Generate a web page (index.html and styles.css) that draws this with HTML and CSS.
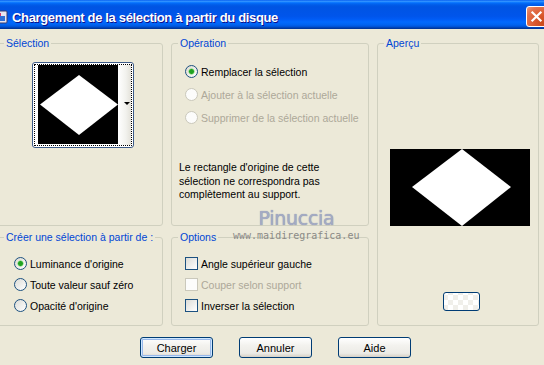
FILE: index.html
```html
<!DOCTYPE html>
<html lang="fr">

<head>
    <meta charset="UTF-8">
    <meta name="viewport" content="width=device-width, initial-scale=1.0">
    <title>Chargement de la sélection à partir du disque</title>
    <link rel="stylesheet" href="styles.css">
</head>

<body>
    <div class="window">
        <header class="titlebar">
            <svg class="app-icon" viewBox="0 0 16 16">
                <rect x="1" y="2" width="14" height="12" rx="1" fill="#e8e4f0" stroke="#3b3b6b"/>
                <rect x="3" y="4" width="6" height="6" fill="#d6336c"/>
                <rect x="7" y="7" width="6" height="5" fill="#2f6fd6"/>
            </svg>
            <h1>Chargement de la sélection à partir du disque</h1>
            <button class="close" aria-label="Fermer">
                <svg viewBox="0 0 21 21"><path d="M6 6 L15 15 M15 6 L6 15" stroke="#fff" stroke-width="2.4" stroke-linecap="square"/></svg>
            </button>
        </header>

        <main class="dialog">
            <div class="groups">
                <section class="group group-selection">
                    <h2 class="group-title">Sélection</h2>
                    <div class="thumb">
                        <div class="thumb-focus">
                            <svg class="thumb-img" viewBox="0 0 80 79">
                                <rect width="80" height="79" fill="#000"/>
                                <polygon points="2,39.5 41,10 80,39.5 41,70" fill="#fff"/>
                            </svg>
                            <div class="thumb-drop"><span class="arrow"></span></div>
                        </div>
                    </div>
                </section>

                <section class="group group-operation">
                    <h2 class="group-title">Opération</h2>
                    <ul class="choices">
                        <li class="radio checked">Remplacer la sélection</li>
                        <li class="radio disabled">Ajouter à la sélection actuelle</li>
                        <li class="radio disabled">Supprimer de la sélection actuelle</li>
                    </ul>
                    <p class="note">Le rectangle d'origine de cette<br>sélection ne correspondra pas<br>complètement au support.</p>
                </section>

                <section class="group group-preview">
                    <h2 class="group-title">Aperçu</h2>
                    <svg class="preview-img" viewBox="0 0 140 77">
                        <rect width="140" height="77" fill="#000"/>
                        <polygon points="22,38 72,0 121,38 72,77" fill="#fff"/>
                    </svg>
                    <button class="mini-btn" aria-label="Aperçu"></button>
                </section>

                <section class="group group-source">
                    <h2 class="group-title">Créer une sélection à partir de :</h2>
                    <ul class="choices">
                        <li class="radio checked">Luminance d'origine</li>
                        <li class="radio">Toute valeur sauf zéro</li>
                        <li class="radio">Opacité d'origine</li>
                    </ul>
                </section>

                <section class="group group-options">
                    <h2 class="group-title">Options</h2>
                    <ul class="choices">
                        <li class="check">Angle supérieur gauche</li>
                        <li class="check disabled">Couper selon support</li>
                        <li class="check">Inverser la sélection</li>
                    </ul>
                </section>
            </div>

            <div class="buttons">
                <button class="btn btn-default">Charger</button>
                <button class="btn">Annuler</button>
                <button class="btn">Aide</button>
            </div>
        </main>

        <!-- filigrane -->
        <div class="watermark">
            <span class="wm-name">Pinuccia</span>
            <span class="wm-url">www.maidiregrafica.eu</span>
        </div>
    </div>
</body>

</html>
```

FILE: styles.css
```css
body {
    margin: 0;
    background: #ece9d8;
    font-family: 'Liberation Sans', Tahoma, sans-serif;
    font-size: 10.5px;
    color: #000;
    overflow: hidden;
}

.window {
    position: relative;
    width: 544px;
    height: 365px;
    overflow: hidden;
}

/* barre de titre */
.titlebar {
    height: 29px;
    box-sizing: border-box;
    padding-top: 5px;
    display: flex;
    align-items: center;
    background: linear-gradient(to bottom, #0058ee 0%, #3593ff 4%, #288eff 6%, #127dff 8%, #036ffc 10%, #0262ee 14%, #0057e5 20%, #0054e3 24%, #0055eb 56%, #005bf5 66%, #026afe 76%, #0062ef 86%, #0052d6 92%, #0040ab 96%, #003092 100%);
}

.app-icon {
    width: 16px;
    height: 16px;
    margin-left: -8px;
    margin-right: 4px;
    flex-shrink: 0;
}

.titlebar h1 {
    margin: 0;
    font-family: 'Liberation Sans', sans-serif;
    font-weight: bold;
    font-size: 13px;
    letter-spacing: -0.35px;
    color: #fff;
    text-shadow: 1px 1px #0f1089;
    white-space: nowrap;
}

.close {
    align-self: flex-start;
    margin: 1px -3px 0 auto;
    width: 21px;
    height: 21px;
    padding: 0;
    border: 1px solid #fff;
    border-radius: 3px;
    background: radial-gradient(circle at 85% 85%, #c94a1c 0%, #d9572c 35%, #e3734e 75%, #ee9a7c 100%);
    flex-shrink: 0;
}

.close svg {
    display: block;
    width: 19px;
    height: 19px;
}

/* zones de groupe */
.groups {
    display: grid;
    grid-template-columns: 166px 198px 162px;
    grid-template-rows: 183px 89px;
    column-gap: 8px;
    row-gap: 11px;
    margin-left: -3px;
    padding-top: 14px;
}

.group {
    position: relative;
    border: 1px solid #d0d0bf;
    border-radius: 3px;
    box-sizing: border-box;
}

.group-title {
    position: absolute;
    top: -7px;
    left: 6px;
    margin: 0;
    padding: 0 2px;
    background: #ece9d8;
    color: #0046d5;
    font-size: 10.5px;
    font-weight: normal;
    line-height: 13px;
    white-space: nowrap;
}

.group-selection {
    display: flex;
    justify-content: center;
    align-items: flex-start;
    padding-top: 18px;
    padding-left: 5px;
}

.group-operation {
    padding: 21px 0 0 7px;
}

.group-preview {
    grid-row: 1 / 3;
    grid-column: 3;
    padding: 105px 0 0 12px;
    display: flex;
    flex-direction: column;
    align-items: flex-start;
}

.group-source {
    padding: 19px 0 0 16px;
}

.group-options {
    padding: 19px 0 0 6px;
}

/* vignette de sélection */
.thumb {
    width: 102px;
    height: 86px;
    box-sizing: border-box;
    border: 1px solid #3c5a86;
    border-radius: 3px;
    padding: 1px;
    background: #fff;
}

.thumb-focus {
    height: 100%;
    box-sizing: border-box;
    border: 1px dotted #000;
    padding: 0 0 0 3px;
    display: flex;
}

.thumb-img {
    width: 80px;
    height: 79px;
    display: block;
}

.thumb-drop {
    flex: 1;
    position: relative;
    background: linear-gradient(to right, #fff, #f2f2ee 60%, #e4e2da);
}

.thumb-drop .arrow {
    position: absolute;
    right: 1px;
    top: 37px;
    border-left: 3px solid transparent;
    border-right: 3px solid transparent;
    border-top: 3px solid #000;
}

/* boutons radio et cases */
.choices {
    list-style: none;
    margin: 0;
    padding: 0;
    display: flex;
    flex-direction: column;
    gap: 8px;
}

.group-operation .choices {
    padding-left: 6px;
    gap: 10px;
}

.group-options .choices {
    padding-left: 7px;
}

.choices li {
    display: flex;
    align-items: center;
    gap: 3px;
    height: 13px;
    white-space: nowrap;
}

.choices li::before {
    content: '';
    width: 13px;
    height: 13px;
    box-sizing: border-box;
    border: 1px solid #1c5180;
    background: linear-gradient(135deg, #dcdcd7, #fff);
    flex-shrink: 0;
}

.radio::before {
    border-radius: 50%;
}

.radio.checked::before {
    background: radial-gradient(circle, #21a121 0 2px, #6ed66e 2.6px, transparent 3.4px), linear-gradient(135deg, #dcd9cf, #fff);
}

.choices li.disabled {
    color: #aca899;
}

.choices li.disabled::before {
    border-color: #cac8bb;
    background: #fcfcfb;
}

.note {
    margin: 37px 0 0;
    line-height: 13.5px;
}

/* aperçu */
.preview-img {
    width: 140px;
    height: 77px;
    display: block;
}

.mini-btn {
    margin: 66px 0 0 53px;
    width: 37px;
    height: 19px;
    padding: 0;
    border: 1px solid #003c74;
    border-radius: 3px;
    background: repeating-conic-gradient(#f0efea 0 25%, #fff 0 50%) 4px 2px / 10px 10px;
}

/* boutons du bas */
.buttons {
    display: flex;
    justify-content: center;
    gap: 26px;
    padding-left: 7px;
    margin-top: 11px;
}

.btn {
    width: 73px;
    height: 21px;
    padding: 0;
    border: 1px solid #003c74;
    border-radius: 3px;
    background: linear-gradient(to bottom, #fff 0%, #f3f2ee 40%, #ecebe6 80%, #d6d0c5 100%);
    font-family: inherit;
    font-size: 11px;
    color: #000;
}

.btn-default {
    box-shadow: inset 0 0 0 1px #cee7ff, inset 0 0 0 2px #98b8ea;
}

/* filigrane */
.watermark {
    position: absolute;
    left: 233px;
    top: 206px;
    width: 121px;
    text-align: center;
    pointer-events: none;
}

.wm-name {
    display: block;
    padding-left: 6px;
    font-family: 'DejaVu Sans', sans-serif;
    font-size: 19px;
    line-height: 24px;
    letter-spacing: -0.3px;
    color: #a4abc4;
    text-shadow: 0 0 1px #7d86a6;
}

.wm-url {
    display: block;
    font-family: 'DejaVu Sans Mono', monospace;
    font-size: 10px;
    line-height: 11px;
    color: #8a8a86;
}
```
